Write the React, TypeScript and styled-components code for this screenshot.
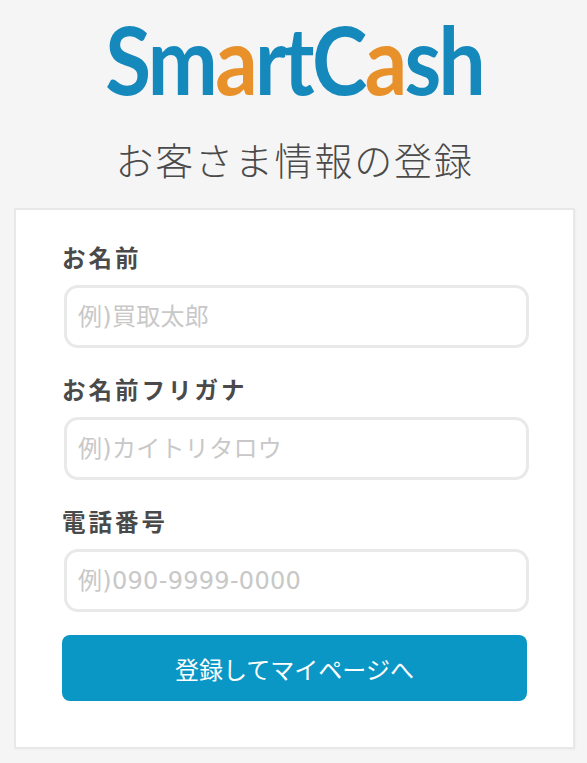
import React from 'react';
import styled, { createGlobalStyle } from 'styled-components';

const GlobalStyle = createGlobalStyle`
  html, body {
    margin: 0;
    padding: 0;
    background: #f5f5f5;
  }
  * {
    box-sizing: border-box;
  }
`;

const CJK = `"Noto Sans CJK JP", "Noto Sans", sans-serif`;

const Page = styled.div`
  width: 587px;
  height: 763px;
  padding: 14px 12px 0 14px;
  overflow: hidden;
  display: flex;
  flex-direction: column;
  font-family: ${CJK};
`;

const Logo = styled.div`
  height: 90px;
  display: flex;
  justify-content: center;
  font-family: "Lato", sans-serif;
  font-size: 94px;
  font-weight: 700;
  line-height: 90px;
  letter-spacing: -3px;
  color: #1588bc;
`;

const LogoWord = styled.span`
  display: block;
  transform: scaleX(0.89);
`;

const Accent = styled.span`
  color: #e8902a;
`;

const Heading = styled.h1`
  margin: 27px 0 0;
  height: 77px;
  text-align: center;
  font-size: 38px;
  font-weight: 300;
  line-height: 56px;
  letter-spacing: 1.8px;
  color: #4a4a4a;
`;

const Card = styled.form`
  width: 561px;
  height: 541px;
  background: #fff;
  border: 2px solid #e8e8e8;
  box-shadow: 1px 1px 2px rgba(0, 0, 0, 0.03);
  padding: 28px 46px 0;
  display: flex;
  flex-direction: column;
`;

const Field = styled.label`
  display: flex;
  flex-direction: column;
  margin-bottom: 22px;
`;

const LabelText = styled.span`
  height: 36px;
  font-size: 23.5px;
  font-weight: 700;
  line-height: 38px;
  letter-spacing: 3px;
  color: #4a4a4a;
`;

const TextInput = styled.input`
  width: 465px;
  height: 63px;
  margin: 11px 0 0 2px;
  padding: 0 11px;
  background: #fff;
  border: 3px solid #e9e9e9;
  border-radius: 14px;
  outline: none;
  font-family: "DejaVu Sans", ${CJK};
  font-size: 24px;
  &::placeholder {
    color: #c8c8c8;
    opacity: 1;
    letter-spacing: 0.3px;
  }
`;

const Submit = styled.button`
  width: 465px;
  height: 66px;
  margin-top: 1px;
  border: none;
  border-radius: 8px;
  background: #0b97c6;
  color: #fff;
  font-family: ${CJK};
  font-size: 24px;
  font-weight: 400;
`;

const FIELDS = [
  { label: 'お名前', placeholder: '例)買取太郎' },
  { label: 'お名前フリガナ', placeholder: '例)カイトリタロウ' },
  { label: '電話番号', placeholder: '例)090-9999-0000' },
];

function App() {
  return (
    <Page>
      <GlobalStyle />
      <Logo>
        <LogoWord>
          Sm<Accent>a</Accent>rtC<Accent>a</Accent>sh
        </LogoWord>
      </Logo>
      <Heading>お客さま情報の登録</Heading>
      <Card>
        {FIELDS.map((f) => (
          <Field key={f.label}>
            <LabelText>{f.label}</LabelText>
            <TextInput type="text" placeholder={f.placeholder} />
          </Field>
        ))}
        <Submit type="button">登録してマイページへ</Submit>
      </Card>
    </Page>
  );
}

export default App;
